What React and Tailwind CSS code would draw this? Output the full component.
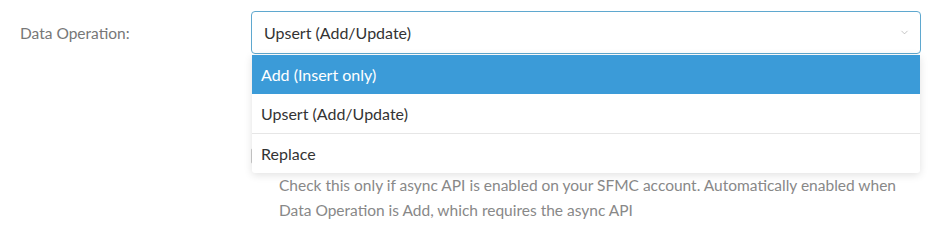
import { ChevronDown } from 'lucide-react';

const options = ['Add (Insert only)', 'Upsert (Add/Update)', 'Replace'];

const App = () => {
  return (
    <div className="w-[940px] h-[235px] bg-white font-['Lato',sans-serif] text-[16px] text-[#333]">
      <div className="flex pt-[11px] pl-[20px] pr-[19px]">
        {/* Label column */}
        <div className="w-[231px] shrink-0 pt-[11px] text-[#777] text-[15.5px]">
          Data Operation:
        </div>

        {/* Field column */}
        <div className="flex-1">
          <div className="relative">
            <div className="h-[43px] flex items-center justify-between pl-[12px] pr-[10px] border border-[#5fa8cf] rounded-[4px] bg-white">
              <span>Upsert (Add/Update)</span>
              <ChevronDown className="w-[11px] h-[11px] text-[#aaa]" strokeWidth={1.5} />
            </div>

            {/* Open menu */}
            <div className="absolute left-[1px] right-[1px] top-[44px] z-10 bg-white rounded-b-[3px] shadow-[0_2px_8px_rgba(0,0,0,0.12)]">
              {options.map((opt, i) => (
                <div
                  key={opt}
                  className={
                    i === 0
                      ? 'h-[39px] flex items-center px-[9px] bg-[#3b9bd8] text-white'
                      : i === 1
                      ? 'h-[40px] flex items-center px-[9px] border-b border-[#e6e6e6]'
                      : 'h-[39px] flex items-center px-[9px]'
                  }
                >
                  {opt}
                </div>
              ))}
            </div>
          </div>

          {/* Async checkbox (covered by the menu) */}
          <div className="flex items-center mt-[91px] h-[22px]">
            <div className="w-[16px] h-[16px] border border-[#ccc] rounded-[2px] bg-white" />
          </div>
          <p className="pl-[28px] mt-[6px] text-[15.5px] leading-[25px] text-[#888]">
            Check this only if async API is enabled on your SFMC account. Automatically enabled when
            <br />
            Data Operation is Add, which requires the async API
          </p>
        </div>
      </div>
    </div>
  );
};

export default App;
